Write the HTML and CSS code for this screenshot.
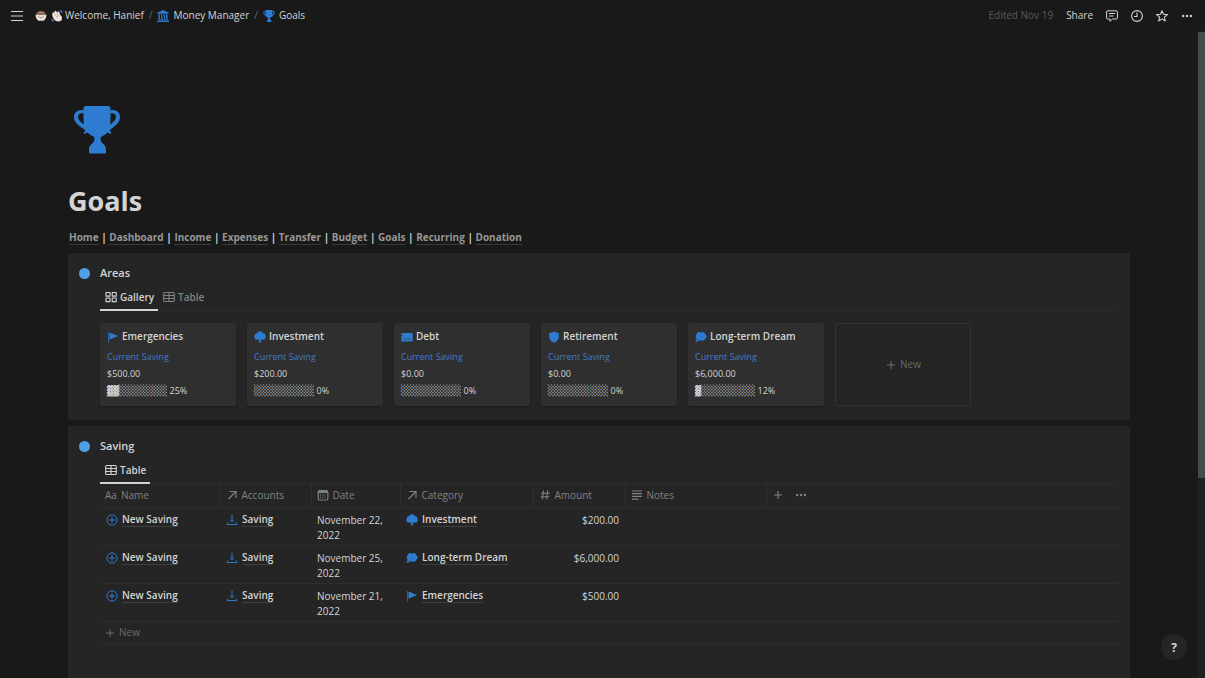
FILE: index.html
```html
<!DOCTYPE html>
<html lang="en">

<head>
    <meta charset="UTF-8">
    <meta name="viewport" content="width=device-width, initial-scale=1.0">
    <title>Goals</title>
    <link rel="stylesheet" href="styles.css">
</head>

<body>

    <!-- Shared icons -->
    <svg class="sprite" aria-hidden="true">
        <symbol id="i-trophy" viewBox="0 0 46 48">
            <path fill="currentColor" d="M12 0h22c1.500 0 2.500 1 2.500 2.500V4.500C41 3 46 6 46 11c0 5-4 8.500-9.500 12.500l-1 1.500 2 1.500-1 1.500-3-1.500c-2 2-4 3.200-6 4-1.500 1.500-1 4 0 5.500 2 2.500 4.500 3.500 4.500 7.500V46c0 1-.5 1.500-1.500 1.500h-14c-1 0-1.500-.5-1.500-1.500v-2.500c0-4 2.500-5 4.500-7.500 1-1.500 1.500-4 0-5.500-2-.8-4-2-6-4l-3 1.500-1-1.500 2-1.500-1-1.500C4 19.500 0 16 0 11 0 6 5 3 9.500 4.500v-2C9.500 1 10.500 0 12 0z" />
            <path class="trophy-hole" d="M9.500 7.500C6.500 6.500 4 8 4 11c0 2.500 2.500 5 6 7.500-.5-3-.5-7-.5-11zM36.500 7.500C39.500 6.500 42 8 42 11c0 2.500-2.500 5-6 7.500.5-3 .5-7 .5-11z" />
        </symbol>
        <symbol id="i-bank" viewBox="0 0 12 12">
            <path fill="currentColor" d="M6 0l5.500 2.600v1.200H.5V2.600zM1.500 4.300H3v4.500H1.500zM4 4.300h1.300v4.500H4zM6.700 4.300H8v4.500H6.700zM9 4.300h1.500v4.500H9zM.8 9.300h10.400v.9H.8zM0 10.700h12V12H0z" />
        </symbol>
        <symbol id="i-flag" viewBox="0 0 12 12">
            <path fill="currentColor" opacity=".7" d="M1 1h1v10.500H1z" />
            <path fill="currentColor" d="M2.500 1.500L11 5 2.500 8.700z" />
        </symbol>
        <symbol id="i-tree" viewBox="0 0 12 12">
            <g fill="currentColor">
                <circle cx="6" cy="3.300" r="3" />
                <circle cx="3" cy="4.700" r="2.500" />
                <circle cx="9" cy="4.700" r="2.500" />
                <circle cx="2.600" cy="6.400" r="2.200" />
                <circle cx="9.400" cy="6.400" r="2.200" />
                <path d="M3 4h6v4.500H7l-.2 1.200.7 1.300c-.4.600-2.600.600-3 0l.7-1.300L5 8.500H3z" />
            </g>
        </symbol>
        <symbol id="i-card" viewBox="0 0 12 12">
            <rect x=".3" y="2" width="11.400" height="8.400" rx="1" fill="currentColor" />
            <path d="M.3 4.600h1.500M2.500 8h1.200M4.500 8h1.200M6.500 8h1.200M9 8h1" stroke="#2f2f2f" stroke-width=".9" />
        </symbol>
        <symbol id="i-shield" viewBox="0 0 12 12">
            <path fill="currentColor" d="M6 .5C7.300 1.400 9 1.900 10.800 2v3.500c0 3-2 5-4.800 6.200C3.200 10.500 1.200 8.500 1.200 5.500V2C3 1.900 4.700 1.400 6 .5z" />
        </symbol>
        <symbol id="i-dream" viewBox="0 0 12 12">
            <g fill="currentColor">
                <circle cx="4" cy="3.600" r="2.500" />
                <circle cx="7.600" cy="3.500" r="2.500" />
                <circle cx="2.900" cy="5.800" r="2.300" />
                <circle cx="9.300" cy="5.600" r="2.400" />
                <circle cx="4.300" cy="7.500" r="2.300" />
                <circle cx="7.800" cy="7.500" r="2.300" />
                <circle cx="1.800" cy="9.600" r="1.200" />
            </g>
        </symbol>
        <symbol id="i-plus-circle" viewBox="0 0 12 12">
            <path d="M6 3v6M3 6h6M6 .9a5.100 5.100 0 1 1 0 10.200A5.100 5.100 0 1 1 6 .9z" fill="none" stroke="currentColor" />
        </symbol>
        <symbol id="i-download" viewBox="0 0 12 12">
            <path d="M6 .5v7M4 5.800l2 2 2-2M1.300 8.500v2h9.400v-2" fill="none" stroke="currentColor" />
        </symbol>
        <symbol id="i-table" viewBox="0 0 12 12">
            <path d="M1.700 1.500h8.600q1 0 1 1v7q0 1-1 1H1.700q-1 0-1-1v-7q0-1 1-1zM.7 4.500h10.600M.7 7.500h10.600M6 1.500v9" fill="none" stroke="currentColor" stroke-width="1.100" />
        </symbol>
        <symbol id="i-gallery" viewBox="0 0 12 12">
            <path d="M1 1.500h4v3.600H1zM7.200 1.500h4v3.600h-4zM1 7h4v3.600H1zM7.200 7h4v3.600h-4z" fill="none" stroke="currentColor" stroke-linejoin="round" stroke-width="1.100" />
        </symbol>
        <symbol id="i-arrow" viewBox="0 0 12 12">
            <path d="M2.500 10L9.500 3M3.500 2.500H10V9" fill="none" stroke="currentColor" stroke-width="1.100" />
        </symbol>
        <symbol id="i-calendar" viewBox="0 0 12 12">
            <rect x="1.200" y="1.500" width="9.600" height="9.500" rx="1.500" fill="none" stroke="currentColor" stroke-width="1.200" />
            <path d="M1.500 3h9" stroke="currentColor" stroke-width="2" />
            <path d="M3 6h6M3 8.200h6" stroke="currentColor" stroke-dasharray="1.200 .8" />
        </symbol>
        <symbol id="i-hash" viewBox="0 0 12 12">
            <path d="M4.500 1.500l-1.200 9M8.700 1.500l-1.200 9M2 4.300h8.700M1.500 7.700h8.700" fill="none" stroke="currentColor" stroke-width="1.100" />
        </symbol>
        <symbol id="i-lines" viewBox="0 0 12 12">
            <path d="M1 2h10M1 4.700h10M1 7.400h10M1 10.100h6.500" stroke="currentColor" stroke-width="1.200" />
        </symbol>
        <symbol id="i-plus" viewBox="0 0 12 12">
            <path d="M6 2v8M2 6h8" stroke="currentColor" stroke-width="1.100" />
        </symbol>
        <symbol id="i-dots" viewBox="0 0 12 12">
            <path fill="currentColor" d="M2.200 4.800a1.200 1.200 0 1 1 0 2.400 1.200 1.200 0 1 1 0-2.400zM6 4.800a1.200 1.200 0 1 1 0 2.400 1.200 1.200 0 1 1 0-2.400zM9.800 4.800a1.200 1.200 0 1 1 0 2.400 1.200 1.200 0 1 1 0-2.400z" />
        </symbol>
    </svg>

    <header class="topbar">
        <button class="icon-btn" aria-label="Menu">
            <svg viewBox="0 0 12 12"><path d="M0 1.500h12M0 6h12M0 10.500h12" stroke="currentColor" /></svg>
        </button>
        <nav class="breadcrumb" aria-label="Breadcrumb">
            <a href="#">
                <svg class="icon" viewBox="0 0 12 12">
                    <path d="M.5 4.500h11c0 3.500-1.500 5-2.800 6.200H3.300C2 9.500.5 8 .5 4.500z" fill="#eadfd8" />
                    <path d="M1.200 4.500C1.500 2.500 3 1 6 1s4.500 1.500 4.800 3.500z" fill="#8d6253" />
                    <path d="M3.500 3.500l1-1M6 3V1.800M8.500 3.500l-1-1" stroke="#e9c8b0" stroke-width=".7" />
                    <path d="M4 6.500v1M8 6.500v1M5.300 7.700h1.400" stroke="#6b4a42" stroke-width=".8" />
                </svg>
                <svg class="icon wave" viewBox="0 0 12 12">
                    <path d="M1.500 3C2 1.800 3 2 3.700 3L3.500 1.800C3.700.6 5 .6 5.400 1.500L6.500 3.200 6.400 2c.2-1 1.500-1 1.800 0L9.500 5.300c1 .5 1.600 1.800 1.500 3.400-.2 1.800-1.600 2.800-3.400 2.800C5.200 11.500 3.500 10.500 2.500 8.500 1.600 7 .8 4.800 1.500 3z" fill="#f1e3da" />
                    <path d="M4 4.500l2.500 3M6.500 4l1.500 2.500" stroke="#8d6253" stroke-width=".5" />
                    <path d="M9 .7q1.700.3 2.300 2M.7 9.200q.6 1.500 2 2.100" fill="none" stroke="#4789d4" stroke-width="1.200" />
                </svg>
                Welcome, Hanief
            </a>
            <span class="slash">/</span>
            <a href="#"><svg class="icon blue"><use href="#i-bank" /></svg>Money Manager</a>
            <span class="slash">/</span>
            <a href="#"><svg class="icon blue"><use href="#i-trophy" /></svg>Goals</a>
        </nav>
        <div class="actions">
            <span class="edited">Edited Nov 19</span>
            <button class="share">Share</button>
            <button class="icon-btn" aria-label="Comments">
                <svg viewBox="0 0 12 12"><path d="M1.700.8h8.600q1.100 0 1.100 1.100v6q0 1.100-1.100 1.100H6.500L4 11.300V9H1.700Q.6 9 .6 7.900v-6Q.6.800 1.700.8zM3 3.500h6M3 6h4.500" fill="none" stroke="currentColor" /></svg>
            </button>
            <button class="icon-btn" aria-label="Updates">
                <svg viewBox="0 0 12 12"><path d="M6 .6a5.400 5.400 0 1 1 0 10.800A5.400 5.400 0 1 1 6 .6zM6 2.500v4H3" fill="none" stroke="currentColor" stroke-width="1.100" /></svg>
            </button>
            <button class="icon-btn" aria-label="Favorite">
                <svg viewBox="0 0 12 12"><path d="M6 .8l1.500 3.500 3.900.3-3 2.500.9 3.900L6 8.900 2.700 11l.9-3.900-3-2.500 3.900-.3z" fill="none" stroke="currentColor" stroke-linejoin="round" stroke-width="1.100" /></svg>
            </button>
            <button class="icon-btn" aria-label="More">
                <svg><use href="#i-dots" /></svg>
            </button>
        </div>
    </header>

    <div class="frame">
        <main class="page">
            <svg class="page-icon blue"><use href="#i-trophy" /></svg>
            <h1>Goals</h1>

            <nav class="links">
                <a href="#">Home</a> | <a href="#">Dashboard</a> | <a href="#">Income</a> | <a href="#">Expenses</a> | <a href="#">Transfer</a> | <a href="#">Budget</a> | <a href="#">Goals</a> | <a href="#">Recurring</a> | <a href="#">Donation</a>
            </nav>

            <section class="callout">
                <h2><span class="dot"></span>Areas</h2>
                <div class="tabs">
                    <button class="tab active"><svg class="icon"><use href="#i-gallery" /></svg>Gallery</button>
                    <button class="tab"><svg class="icon"><use href="#i-table" /></svg>Table</button>
                </div>
                <div class="gallery">
                    <article class="card">
                        <h3><svg class="icon blue"><use href="#i-flag" /></svg>Emergencies</h3>
                        <p class="label">Current Saving</p>
                        <p>$500.00</p>
                        <p><span class="bar">▓▓░░░░░░░░</span> 25%</p>
                    </article>
                    <article class="card">
                        <h3><svg class="icon blue"><use href="#i-tree" /></svg>Investment</h3>
                        <p class="label">Current Saving</p>
                        <p>$200.00</p>
                        <p><span class="bar">░░░░░░░░░░</span> 0%</p>
                    </article>
                    <article class="card">
                        <h3><svg class="icon blue"><use href="#i-card" /></svg>Debt</h3>
                        <p class="label">Current Saving</p>
                        <p>$0.00</p>
                        <p><span class="bar">░░░░░░░░░░</span> 0%</p>
                    </article>
                    <article class="card">
                        <h3><svg class="icon blue"><use href="#i-shield" /></svg>Retirement</h3>
                        <p class="label">Current Saving</p>
                        <p>$0.00</p>
                        <p><span class="bar">░░░░░░░░░░</span> 0%</p>
                    </article>
                    <article class="card">
                        <h3><svg class="icon blue"><use href="#i-dream" /></svg>Long-term Dream</h3>
                        <p class="label">Current Saving</p>
                        <p>$6,000.00</p>
                        <p><span class="bar">▓░░░░░░░░░</span> 12%</p>
                    </article>
                    <button class="card-new"><svg class="icon"><use href="#i-plus" /></svg>New</button>
                </div>
            </section>

            <section class="callout saving">
                <h2><span class="dot"></span>Saving</h2>
                <div class="tabs">
                    <button class="tab active"><svg class="icon"><use href="#i-table" /></svg>Table</button>
                </div>
                <table>
                    <colgroup>
                        <col class="col-name">
                        <col class="col-accounts">
                        <col class="col-date">
                        <col class="col-category">
                        <col class="col-amount">
                        <col class="col-notes">
                        <col>
                    </colgroup>
                    <thead>
                        <tr>
                            <th><span class="cell"><span class="aa">Aa</span>Name</span></th>
                            <th><span class="cell"><svg class="icon"><use href="#i-arrow" /></svg>Accounts</span></th>
                            <th><span class="cell"><svg class="icon"><use href="#i-calendar" /></svg>Date</span></th>
                            <th><span class="cell"><svg class="icon"><use href="#i-arrow" /></svg>Category</span></th>
                            <th><span class="cell"><svg class="icon"><use href="#i-hash" /></svg>Amount</span></th>
                            <th><span class="cell"><svg class="icon"><use href="#i-lines" /></svg>Notes</span></th>
                            <th>
                                <span class="cell tools">
                                    <button aria-label="Add column"><svg class="icon"><use href="#i-plus" /></svg></button>
                                    <button aria-label="More"><svg class="icon"><use href="#i-dots" /></svg></button>
                                </span>
                            </th>
                        </tr>
                    </thead>
                    <tbody>
                        <tr>
                            <td><span class="cell"><svg class="icon blue"><use href="#i-plus-circle" /></svg><a href="#">New Saving</a></span></td>
                            <td><span class="cell"><svg class="icon blue"><use href="#i-download" /></svg><a href="#">Saving</a></span></td>
                            <td>November 22, 2022</td>
                            <td><span class="cell"><svg class="icon blue"><use href="#i-tree" /></svg><a href="#">Investment</a></span></td>
                            <td class="amount">$200.00</td>
                            <td></td>
                            <td></td>
                        </tr>
                        <tr>
                            <td><span class="cell"><svg class="icon blue"><use href="#i-plus-circle" /></svg><a href="#">New Saving</a></span></td>
                            <td><span class="cell"><svg class="icon blue"><use href="#i-download" /></svg><a href="#">Saving</a></span></td>
                            <td>November 25, 2022</td>
                            <td><span class="cell"><svg class="icon blue"><use href="#i-dream" /></svg><a href="#">Long-term Dream</a></span></td>
                            <td class="amount">$6,000.00</td>
                            <td></td>
                            <td></td>
                        </tr>
                        <tr>
                            <td><span class="cell"><svg class="icon blue"><use href="#i-plus-circle" /></svg><a href="#">New Saving</a></span></td>
                            <td><span class="cell"><svg class="icon blue"><use href="#i-download" /></svg><a href="#">Saving</a></span></td>
                            <td>November 21, 2022</td>
                            <td><span class="cell"><svg class="icon blue"><use href="#i-flag" /></svg><a href="#">Emergencies</a></span></td>
                            <td class="amount">$500.00</td>
                            <td></td>
                            <td></td>
                        </tr>
                    </tbody>
                </table>
                <button class="row-new"><svg class="icon"><use href="#i-plus" /></svg>New</button>
            </section>
        </main>
        <div class="scrollbar"><div class="thumb"></div></div>
    </div>

    <button class="help" aria-label="Help">?</button>

</body>

</html>
```
FILE: styles.css
```css
* {
    box-sizing: border-box;
}

body {
    margin: 0;
    height: 100vh;
    display: flex;
    flex-direction: column;
    overflow: hidden;
    background-color: #191919;
    color: #d4d4d4;
    font-family: "Open Sans", "Noto Sans", sans-serif;
    font-size: 10px;
    line-height: 15px;
}

a {
    color: inherit;
    text-decoration: none;
}

button {
    padding: 0;
    border: none;
    background: none;
    color: inherit;
    font: inherit;
    cursor: pointer;
}

h1,
h2,
h3,
p {
    margin: 0;
}

.sprite {
    position: absolute;
    width: 0;
    height: 0;
}

.icon {
    width: 12px;
    height: 12px;
    flex-shrink: 0;
}

.blue {
    color: #2e7cd1;
}

.trophy-hole {
    fill: #191919;
}

/* Top bar */
.topbar {
    flex-shrink: 0;
    display: flex;
    align-items: center;
    height: 31px;
    padding: 0 12px 0 11px;
}

.icon-btn {
    display: flex;
}

.icon-btn svg {
    width: 12px;
    height: 12px;
}

.breadcrumb {
    display: flex;
    align-items: center;
    gap: 5px;
    margin-left: 12px;
}

.breadcrumb a {
    display: flex;
    align-items: center;
    gap: 4px;
}

.breadcrumb .wave {
    margin-right: -2px;
}

.slash {
    color: #6a6a6a;
}

.actions {
    display: flex;
    align-items: center;
    gap: 13px;
    margin-left: auto;
}

.edited {
    color: #5a5a5a;
}

/* Page */
.frame {
    flex: 1;
    min-height: 0;
    display: flex;
}

.page {
    flex: 1;
    min-width: 0;
    overflow-y: auto;
    scrollbar-width: none;
    padding: 75px 68px 0;
}

.scrollbar {
    width: 7px;
    padding-top: 1px;
    background-color: #1f2120;
}

.thumb {
    height: 69%;
    background-color: #464b50;
}

.page-icon {
    display: block;
    width: 46px;
    height: 48px;
    margin-left: 6px;
}

h1 {
    margin-top: 27px;
    font-size: 27px;
    line-height: 40px;
}

.links {
    margin: 8px 0 8px 1px;
    font-weight: 700;
    line-height: 16px;
}

.links a {
    color: #979797;
    border-bottom: 1px solid #3a3a3a;
}

.callout {
    padding: 12px 12px 14px 32px;
    border-radius: 2px;
    background-color: #252525;
}

.saving {
    margin-top: 6px;
    padding-bottom: 60px;
}

h2 {
    display: flex;
    align-items: center;
    gap: 10px;
    margin-left: -21px;
    font-size: 11px;
    font-weight: 600;
    line-height: 16px;
}

.dot {
    width: 11px;
    height: 11px;
    border-radius: 50%;
    background-color: #529fe6;
}

.tabs {
    display: flex;
    margin-top: 4px;
    border-bottom: 1px solid #2c2c2c;
}

.tab {
    display: flex;
    align-items: center;
    gap: 3px;
    height: 26px;
    padding: 0 4px 0 5px;
    margin-bottom: -1px;
    border-bottom: 2px solid transparent;
    color: #828282;
    font-weight: 600;
}

.tab.active {
    color: #d4d4d4;
    border-bottom-color: #d4d4d4;
}

/* Gallery */
.gallery {
    display: grid;
    grid-template-columns: repeat(auto-fill, minmax(130px, 1fr));
    gap: 11px;
    margin-top: 12px;
}

.card {
    padding: 5px 7px 7px;
    border-radius: 2px;
    background-color: #2f2f2f;
    box-shadow: 0 1px 2px rgba(0, 0, 0, 0.3);
    font-size: 9px;
    line-height: 17px;
    white-space: nowrap;
}

.card h3 {
    display: flex;
    align-items: center;
    gap: 3px;
    margin-bottom: 3px;
    font-size: 10px;
    font-weight: 600;
}

.card .label {
    color: #447acb;
}

.bar {
    font-family: "DejaVu Sans Mono", monospace;
    font-size: 10px;
}

.card-new {
    display: flex;
    align-items: center;
    justify-content: center;
    gap: 3px;
    border: 1px solid #333;
    border-radius: 2px;
    color: #6a6a6a;
}

/* Saving table */
table {
    width: 100%;
    table-layout: fixed;
    border-collapse: collapse;
}

.col-name {
    width: 120px;
}

.col-accounts {
    width: 91px;
}

.col-date {
    width: 89px;
}

.col-category {
    width: 133px;
}

.col-amount {
    width: 92px;
}

.col-notes {
    width: 141px;
}

th {
    height: 23px;
    padding: 0 5px;
    border-right: 1px solid #303030;
    border-bottom: 1px solid #2e2e2e;
    color: #828282;
    font-weight: 400;
    text-align: left;
}

th:last-child {
    border-right: none;
}

td {
    height: 38px;
    padding: 5px 6px 2px;
    border-bottom: 1px solid #2e2e2e;
    vertical-align: top;
}

td a {
    font-weight: 600;
    line-height: 13px;
    border-bottom: 1px solid #3f3f3f;
}

.cell {
    display: flex;
    align-items: center;
    gap: 4px;
}

.tools {
    gap: 11px;
}

.tools button {
    display: flex;
}

.aa {
    width: 12px;
}

.amount {
    text-align: right;
}

.row-new {
    display: flex;
    align-items: center;
    gap: 3px;
    width: 100%;
    height: 23px;
    padding: 0 4px;
    border-bottom: 1px solid #2e2e2e;
    color: #6a6a6a;
}

.help {
    position: fixed;
    right: 18px;
    bottom: 18px;
    width: 26px;
    height: 26px;
    border-radius: 50%;
    background-color: #252525;
    font-size: 12px;
    font-weight: 700;
}
```
